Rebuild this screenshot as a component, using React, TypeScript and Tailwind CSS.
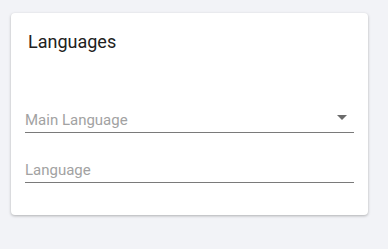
import React from "react";

const fields = [
  { label: "Main Language", select: true },
  { label: "Language", select: false },
];

const App: React.FC = () => (
  <div className="h-[249px] w-[388px] bg-[#f2f3f7] pl-[11px] pt-[13px] font-['Roboto',sans-serif]">
    <div className="w-[357px] rounded-[4px] bg-white px-[14px] pt-[17px] pb-[32px] shadow-[0_1px_3px_rgba(0,0,0,0.28)]">
      <h2 className="ml-[3px] text-[18px] leading-[24px] text-[#212121]">Languages</h2>
      <div className="mt-[51px] flex flex-col gap-[27px]">
        {fields.map((f) => (
          <div key={f.label} className="flex items-end border-b border-[#7a7a7a] pb-[1px]">
            <span className="mb-[1px] flex-1 text-[15px] leading-[20px] text-[#a2a2a2]">{f.label}</span>
            {f.select && (
              <svg width="24" height="24" viewBox="0 0 24 24" className="mb-[2px] fill-[#6b6b6b]">
                <path d="M7 10l5 5 5-5z" />
              </svg>
            )}
          </div>
        ))}
      </div>
    </div>
  </div>
);

export default App;
